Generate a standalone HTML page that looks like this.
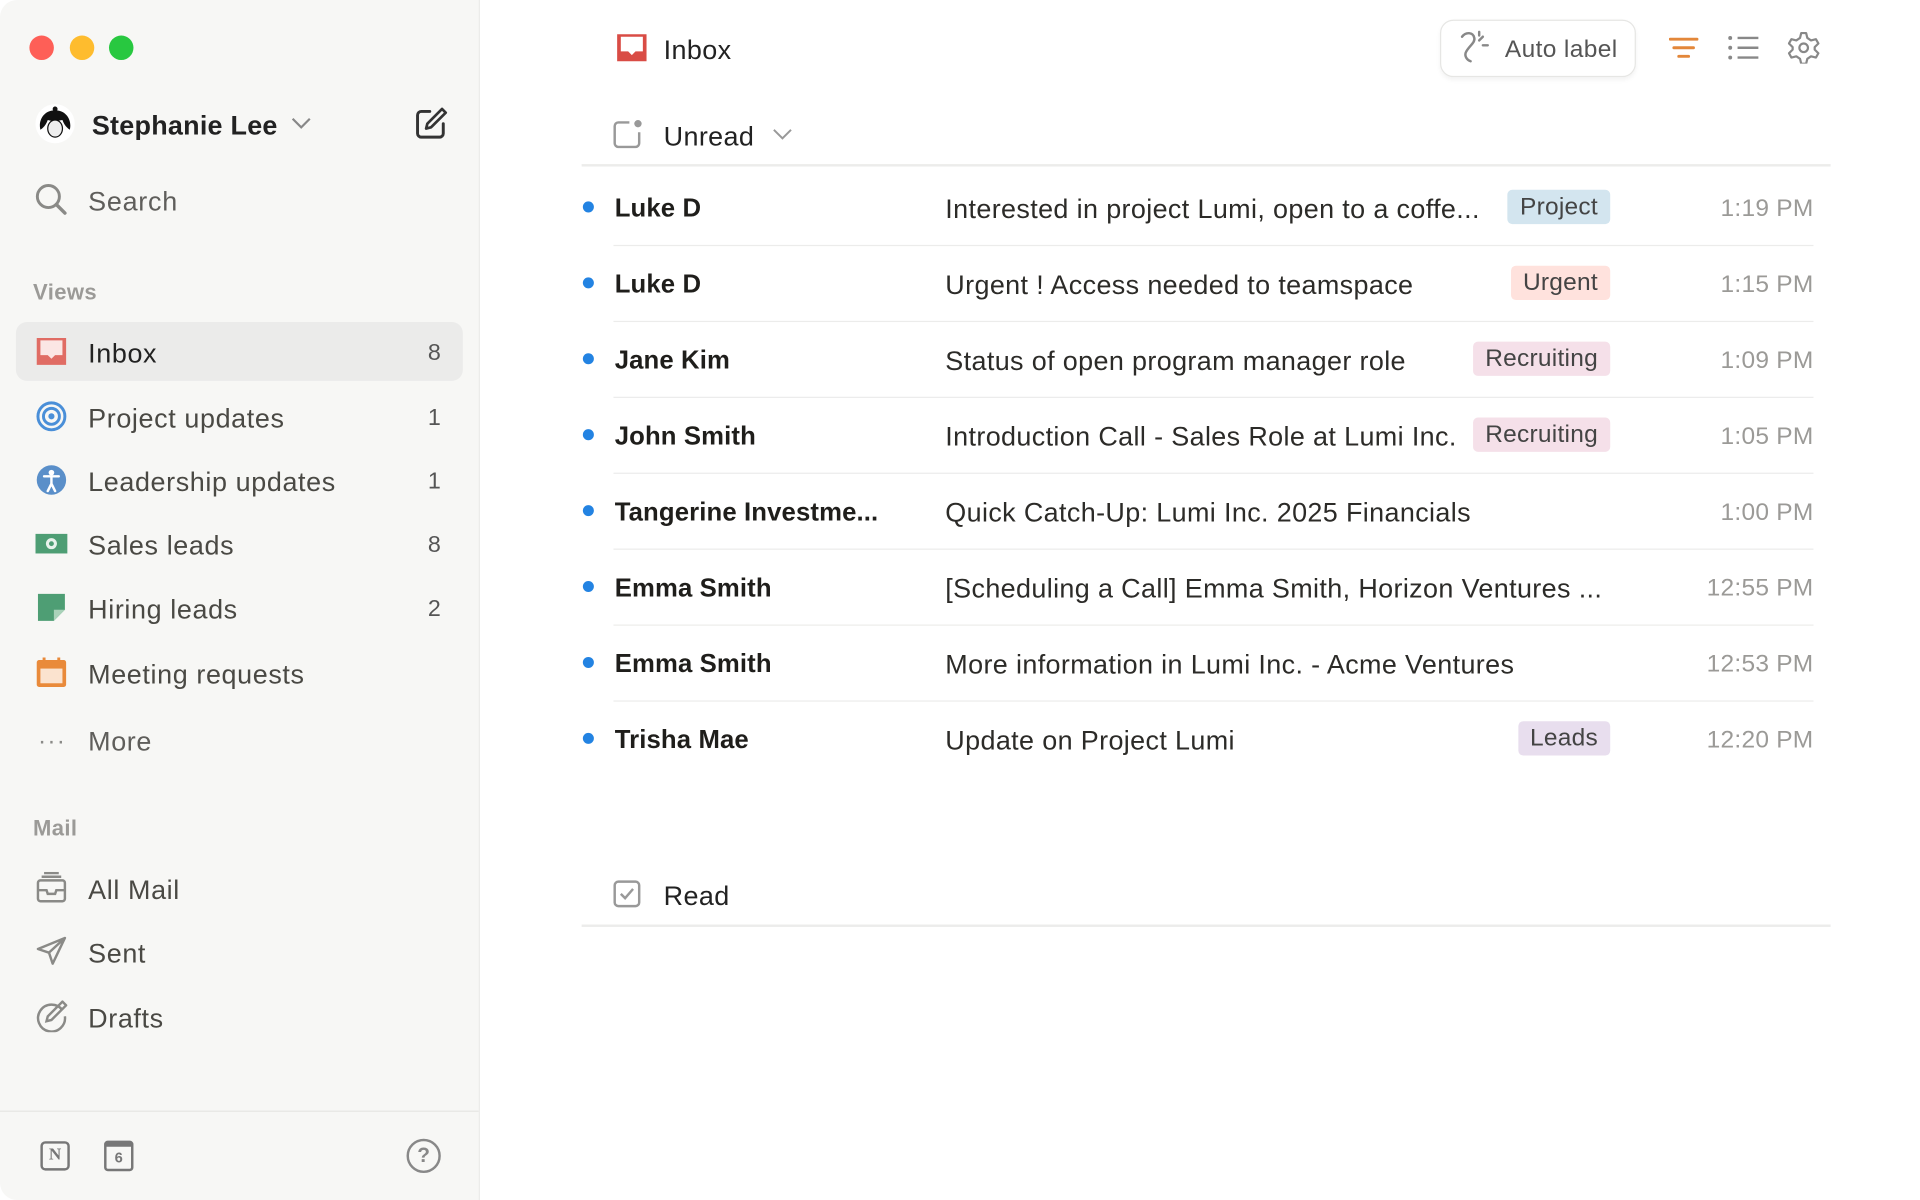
<!DOCTYPE html>
<html><head><meta charset="utf-8">
<style>
html,body{margin:0;padding:0;background:#fff;width:1920px;height:1200px;overflow:hidden}
#w{position:absolute;left:0;top:0;width:1568px;height:980px;transform:scale(1.22449);transform-origin:0 0;font-family:"Liberation Sans",sans-serif;color:#37352f;background:#fff;border-radius:14px;overflow:hidden}
.abs{position:absolute}
#side{position:absolute;left:0;top:0;width:391px;height:980px;background:#f7f7f5;border-right:1px solid #ececea}
.t{position:absolute;transform:translateY(calc(-50% + 2px));white-space:nowrap}
.nav{font-size:22px;color:#4a4944;left:72px;letter-spacing:0.5px}
.cnt{position:absolute;transform:translateY(calc(-50% + 2px));right:31px;font-size:19px;color:#555}
.ic{position:absolute;transform:translate(-50%,-50%)}
.row .name{left:502px;font-size:21px;font-weight:bold;color:#1f1e1b;letter-spacing:0.1px}
.sub{left:772px;font-size:22px;color:#2c2b28;letter-spacing:0.3px}
.tm{right:87px;font-size:20px;color:#9b9a97;letter-spacing:0.2px}
.tag{position:absolute;transform:translateY(-50%);right:253px;height:28px;line-height:28px;padding:0 10px;border-radius:4px;font-size:20px;color:#444;letter-spacing:0.2px}
.dot{position:absolute;width:9px;height:9px;border-radius:50%;background:#2383e2;left:476px;transform:translateY(-50%)}
.sep{position:absolute;left:501px;width:980px;height:1px;background:#ececeb}
</style></head><body><div id="w">
<div id="side">
 <div class="abs" style="left:24px;top:29px;width:20px;height:20px;border-radius:50%;background:#fe5f57"></div>
 <div class="abs" style="left:57px;top:29px;width:20px;height:20px;border-radius:50%;background:#febc2e"></div>
 <div class="abs" style="left:89px;top:29px;width:20px;height:20px;border-radius:50%;background:#28c840"></div>
 <svg class="ic" style="left:45px;top:101px" width="34" height="34" viewBox="0 0 34 34"><circle cx="17" cy="17" r="16" fill="#fff"/><path d="M5 22 C3 14 8 6 17 6 C26 6 31 14 29 22 C26 20 24 17 23 14 C18 15 14 15 11 14 C10 17 8 20 5 22Z" fill="#111"/><ellipse cx="17" cy="21" rx="6" ry="7" fill="#eee" stroke="#111"/><circle cx="17" cy="5" r="2" fill="#111"/></svg>
 <div class="t" style="left:75px;top:101px;font-size:22px;font-weight:bold;color:#222;letter-spacing:0.2px">Stephanie Lee</div>
 <svg class="ic" style="left:246px;top:101px" width="16" height="10" viewBox="0 0 16 10"><path d="M1 1l7 7 7-7" fill="none" stroke="#888" stroke-width="1.8"/></svg>
 <svg class="ic" style="left:352px;top:101px" width="28" height="28" viewBox="0 0 28 28"><path d="M13 4H6a3 3 0 0 0-3 3v15a3 3 0 0 0 3 3h15a3 3 0 0 0 3-3v-8" fill="none" stroke="#333" stroke-width="2.4" stroke-linecap="round"/><path d="M10 18l1-4 12-12 3 3-12 12z" fill="none" stroke="#333" stroke-width="2.2" stroke-linejoin="round"/></svg>
 <svg class="ic" style="left:42px;top:163px" width="28" height="28" viewBox="0 0 28 28"><circle cx="11.5" cy="11.5" r="9" fill="none" stroke="#8a8a87" stroke-width="2.4"/><path d="M18 18l7 7" stroke="#8a8a87" stroke-width="2.8" stroke-linecap="round"/></svg>
 <div class="t" style="left:72px;top:163px;font-size:22px;color:#5f5e5b;letter-spacing:0.6px">Search</div>
 <div class="t" style="left:27px;top:237px;font-size:18px;color:#9b9a97;font-weight:bold;letter-spacing:0.3px">Views</div>
 <div class="abs" style="left:13px;top:263px;width:365px;height:48px;border-radius:9px;background:#ebebea"></div>
 <svg class="ic" style="left:42px;top:287px" width="26" height="24" viewBox="0 0 26 24"><path d="M1 1h24v22H1z" fill="#e06c64"/><path d="M4 3h18v12h-6l-3 3-3-3H4z" fill="#fbe6e4"/></svg>
 <div class="t nav" style="top:287px;color:#222">Inbox</div><div class="cnt" style="top:287px">8</div>
 <svg class="ic" style="left:42px;top:340px" width="26" height="26" viewBox="0 0 26 26"><circle cx="13" cy="13" r="11" fill="none" stroke="#4a8fd8" stroke-width="2.4"/><circle cx="13" cy="13" r="6.5" fill="none" stroke="#4a8fd8" stroke-width="2.4"/><circle cx="13" cy="13" r="2.5" fill="#4a8fd8"/></svg>
 <div class="t nav" style="top:340px">Project updates</div><div class="cnt" style="top:340px">1</div>
 <svg class="ic" style="left:42px;top:392px" width="26" height="26" viewBox="0 0 26 26"><circle cx="13" cy="13" r="12" fill="#5a8fc9"/><circle cx="13" cy="7" r="2.3" fill="#fff"/><path d="M7 10h12M13 10v6l-3 6M13 16l3 6" stroke="#fff" stroke-width="2" fill="none" stroke-linecap="round"/></svg>
 <div class="t nav" style="top:392px">Leadership updates</div><div class="cnt" style="top:392px">1</div>
 <svg class="ic" style="left:42px;top:444px" width="28" height="20" viewBox="0 0 28 20"><rect x="1" y="2" width="26" height="16" fill="#4e9e74"/><circle cx="14" cy="10" r="4.5" fill="#e8f3ec"/><circle cx="14" cy="10" r="2" fill="#4e9e74"/></svg>
 <div class="t nav" style="top:444px">Sales leads</div><div class="cnt" style="top:444px">8</div>
 <svg class="ic" style="left:42px;top:496px" width="24" height="24" viewBox="0 0 24 24"><path d="M1 1h22v13l-9 9H1z" fill="#4e9e74"/><path d="M14 23v-9h9z" fill="#a9d2b9"/></svg>
 <div class="t nav" style="top:496px">Hiring leads</div><div class="cnt" style="top:496px">2</div>
 <svg class="ic" style="left:42px;top:549px" width="26" height="26" viewBox="0 0 26 26"><rect x="1" y="3" width="24" height="22" rx="2" fill="#e98a3a"/><rect x="4" y="10" width="18" height="12" fill="#fbe3cf"/><path d="M7 1v5M19 1v5" stroke="#e98a3a" stroke-width="2.4"/></svg>
 <div class="t nav" style="top:549px">Meeting requests</div>
 <div class="t" style="left:31px;top:604px;font-size:20px;color:#8a8a87;letter-spacing:1px">···</div>
 <div class="t nav" style="top:604px;color:#5f5e5b">More</div>
 <div class="t" style="left:27px;top:675px;font-size:18px;color:#9b9a97;font-weight:bold;letter-spacing:0.3px">Mail</div>
 <svg class="ic" style="left:42px;top:725px" width="26" height="26" viewBox="0 0 26 26"><rect x="2" y="7" width="22" height="17" rx="2" fill="none" stroke="#8a8a87" stroke-width="2"/><path d="M5 4h16M7 1h12M2 15h7l1 3h6l1-3h7" fill="none" stroke="#8a8a87" stroke-width="2"/></svg>
 <div class="t nav" style="top:725px">All Mail</div>
 <svg class="ic" style="left:42px;top:777px" width="26" height="26" viewBox="0 0 26 26"><path d="M24 2L2 11l9 3 3 9zM11 14l13-12" fill="none" stroke="#8a8a87" stroke-width="2" stroke-linejoin="round"/></svg>
 <div class="t nav" style="top:777px">Sent</div>
 <svg class="ic" style="left:42px;top:830px" width="26" height="26" viewBox="0 0 26 26"><path d="M22 8A11 11 0 1 0 24 13" fill="none" stroke="#8a8a87" stroke-width="2"/><path d="M9 17l1-4 12-12 3 3-12 12z" fill="none" stroke="#8a8a87" stroke-width="2"/></svg>
 <div class="t nav" style="top:830px">Drafts</div>
 <div class="abs" style="left:0;top:907px;width:391px;height:1px;background:#e6e6e4"></div>
 <div class="ic" style="left:45px;top:944px;width:20px;height:20px;border:2px solid #777;border-radius:4px;font:bold 14px 'Liberation Serif',serif;color:#777;text-align:center;line-height:20px">N</div>
 <div class="ic" style="left:97px;top:944px;width:20px;height:18px;border:2px solid #777;border-top-width:5px;border-radius:3px;font:bold 12px 'Liberation Sans',sans-serif;color:#777;text-align:center;line-height:18px">6</div>
 <div class="ic" style="left:346px;top:944px;width:24px;height:24px;border:2px solid #888;border-radius:50%;font:bold 17px 'Liberation Sans',sans-serif;color:#888;text-align:center;line-height:24px">?</div>
</div>

<svg class="ic" style="left:516px;top:39px" width="26" height="26" viewBox="0 0 26 24"><path d="M1 1h24v22H1z" fill="#d94c45"/><path d="M4 3h18v12h-6l-3 3-3-3H4z" fill="#fff"/></svg>
<div class="t" style="left:542px;top:39px;font-size:22px;color:#222;letter-spacing:0.3px">Inbox</div>
<div class="abs" style="left:1176px;top:16px;width:158px;height:45px;border:1px solid #e6e6e4;border-radius:11px;box-shadow:0 2px 4px rgba(0,0,0,.05)"></div>
<svg class="ic" style="left:1204px;top:39px" width="26" height="28" viewBox="0 0 26 28"><path d="M3 5c3-4 9-4 10 1 1 4-5 7-7 12-1 3 1 6 4 7" fill="none" stroke="#888" stroke-width="2" stroke-linecap="round"/><path d="M17 8l3-3M20 12h4M17 4v-3" stroke="#888" stroke-width="2" stroke-linecap="round"/></svg>
<div class="t" style="left:1229px;top:39px;font-size:20px;color:#555;letter-spacing:0.3px">Auto label</div>
<svg class="ic" style="left:1375px;top:39px" width="24" height="18" viewBox="0 0 24 18"><path d="M1 2h22M4 9h16M8 16h8" stroke="#e3873a" stroke-width="2.4" stroke-linecap="round"/></svg>
<svg class="ic" style="left:1424px;top:39px" width="26" height="20" viewBox="0 0 26 20"><path d="M8 2h17M8 10h17M8 18h17" stroke="#888" stroke-width="2"/><circle cx="2" cy="2" r="1.6" fill="#888"/><circle cx="2" cy="10" r="1.6" fill="#888"/><circle cx="2" cy="18" r="1.6" fill="#888"/></svg>
<svg class="ic" style="left:1473px;top:39px" width="26" height="26" viewBox="0 0 26 26"><path d="M11 1h4l1 4 3 2 4-1 2 3.5-3 3v2l3 3-2 3.5-4-1-3 2-1 4h-4l-1-4-3-2-4 1-2-3.5 3-3v-2l-3-3L3 6l4 1 3-2z" fill="none" stroke="#888" stroke-width="1.8" stroke-linejoin="round"/><circle cx="13" cy="13" r="3.5" fill="none" stroke="#888" stroke-width="1.8"/></svg>

<svg class="ic" style="left:512px;top:110px" width="26" height="26" viewBox="0 0 26 26"><path d="M15 3H6a3 3 0 0 0-3 3v14a3 3 0 0 0 3 3h14a3 3 0 0 0 3-3v-9" fill="none" stroke="#999" stroke-width="2"/><circle cx="22" cy="4" r="3" fill="#999"/></svg>
<div class="t" style="left:542px;top:110px;font-size:22px;color:#222;letter-spacing:0.3px">Unread</div>
<svg class="ic" style="left:639px;top:110px" width="16" height="10" viewBox="0 0 16 10"><path d="M1 1l7 7 7-7" fill="none" stroke="#999" stroke-width="1.6"/></svg>
<div class="abs" style="left:475px;top:134px;width:1020px;height:2px;background:#ececeb"></div>

<div class="row">
<div class="dot" style="top:169px"></div><div class="t name" style="top:169px">Luke D</div><div class="t sub" style="top:169px">Interested in project Lumi, open to a coffe...</div><div class="tag" style="top:169px;background:#d3e5ef">Project</div><div class="t tm" style="top:169px">1:19 PM</div>
<div class="sep" style="top:200px"></div>
<div class="dot" style="top:231px"></div><div class="t name" style="top:231px">Luke D</div><div class="t sub" style="top:231px">Urgent ! Access needed to teamspace</div><div class="tag" style="top:231px;background:#ffe2dd">Urgent</div><div class="t tm" style="top:231px">1:15 PM</div>
<div class="sep" style="top:262px"></div>
<div class="dot" style="top:293px"></div><div class="t name" style="top:293px">Jane Kim</div><div class="t sub" style="top:293px">Status of open program manager role</div><div class="tag" style="top:293px;background:#f5e0e9">Recruiting</div><div class="t tm" style="top:293px">1:09 PM</div>
<div class="sep" style="top:324px"></div>
<div class="dot" style="top:355px"></div><div class="t name" style="top:355px">John Smith</div><div class="t sub" style="top:355px">Introduction Call - Sales Role at Lumi Inc.</div><div class="tag" style="top:355px;background:#f5e0e9">Recruiting</div><div class="t tm" style="top:355px">1:05 PM</div>
<div class="sep" style="top:386px"></div>
<div class="dot" style="top:417px"></div><div class="t name" style="top:417px">Tangerine Investme...</div><div class="t sub" style="top:417px">Quick Catch-Up: Lumi Inc. 2025 Financials</div><div class="t tm" style="top:417px">1:00 PM</div>
<div class="sep" style="top:448px"></div>
<div class="dot" style="top:479px"></div><div class="t name" style="top:479px">Emma Smith</div><div class="t sub" style="top:479px">[Scheduling a Call] Emma Smith, Horizon Ventures ...</div><div class="t tm" style="top:479px">12:55 PM</div>
<div class="sep" style="top:510px"></div>
<div class="dot" style="top:541px"></div><div class="t name" style="top:541px">Emma Smith</div><div class="t sub" style="top:541px">More information in Lumi Inc. - Acme Ventures</div><div class="t tm" style="top:541px">12:53 PM</div>
<div class="sep" style="top:572px"></div>
<div class="dot" style="top:603px"></div><div class="t name" style="top:603px">Trisha Mae</div><div class="t sub" style="top:603px">Update on Project Lumi</div><div class="tag" style="top:603px;background:#e8deee">Leads</div><div class="t tm" style="top:603px">12:20 PM</div>
</div>

<svg class="ic" style="left:512px;top:730px" width="24" height="24" viewBox="0 0 24 24"><rect x="2" y="2" width="20" height="20" rx="3" fill="none" stroke="#999" stroke-width="2"/><path d="M7 12l3.5 3.5L17 8" fill="none" stroke="#999" stroke-width="2"/></svg>
<div class="t" style="left:542px;top:730px;font-size:22px;color:#222;letter-spacing:0.3px">Read</div>
<div class="abs" style="left:475px;top:755px;width:1020px;height:2px;background:#ececeb"></div>
</div></body></html>
